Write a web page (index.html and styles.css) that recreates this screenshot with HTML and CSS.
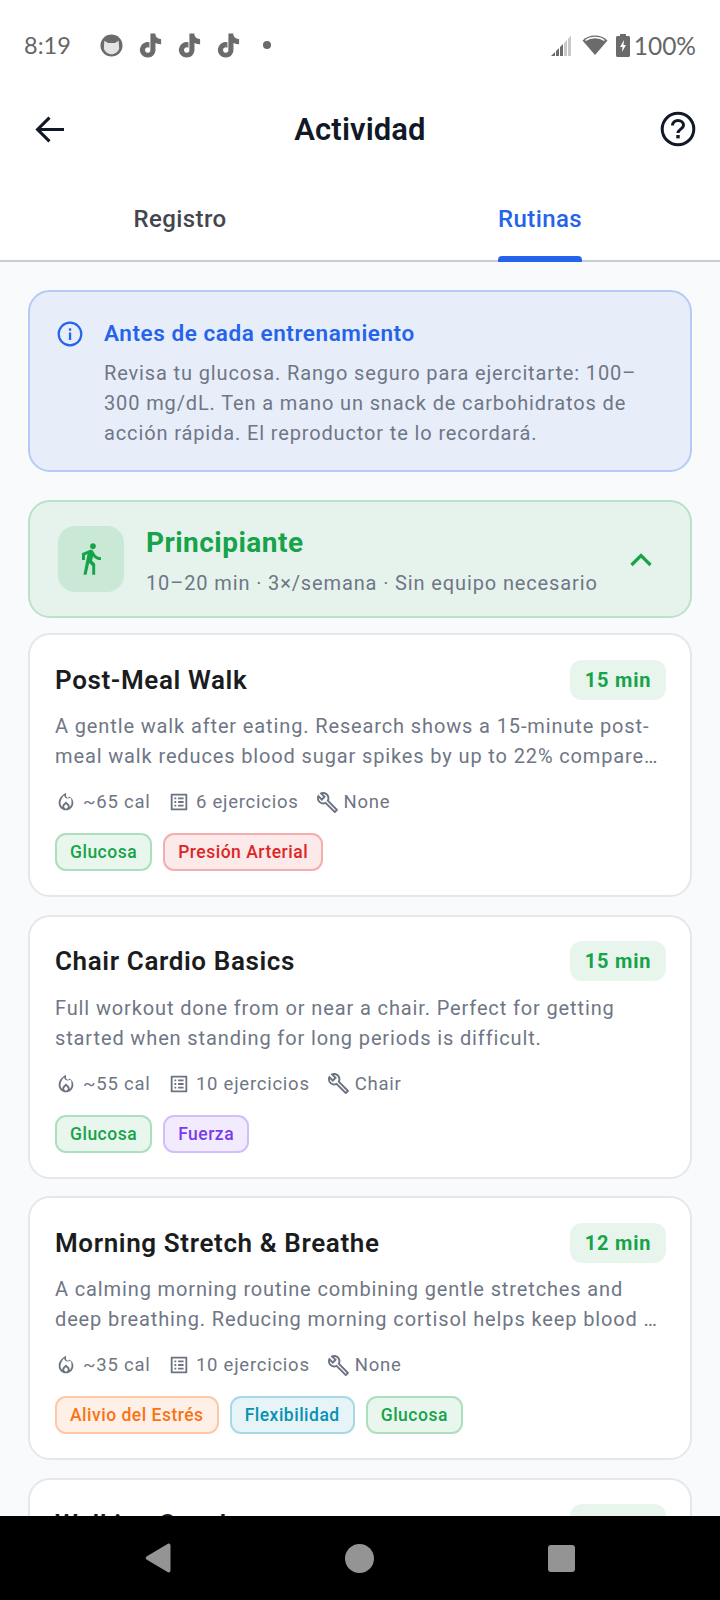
FILE: index.html
```html
<!DOCTYPE html>
<html>
<head>
    <title>Actividad</title>
    <meta charset="utf-8">
    <link rel="stylesheet" href="styles.css">
</head>
<body>
    <svg class="defs" width="0" height="0">
        <symbol id="tiktok" viewBox="-1 -1 26 26"><path stroke="#6b6b6b" stroke-width="1.200" d="M12.525.02c1.31-.02 2.61-.01 3.91-.02.08 1.53.63 3.09 1.75 4.17 1.12 1.11 2.7 1.62 4.24 1.79v4.03c-1.44-.05-2.89-.35-4.2-.97-.57-.26-1.1-.59-1.62-.93-.01 2.92.01 5.84-.02 8.75-.08 1.4-.54 2.79-1.35 3.94-1.31 1.92-3.58 3.17-5.91 3.21-1.43.08-2.86-.31-4.08-1.03-2.02-1.19-3.44-3.37-3.65-5.71-.02-.5-.03-1-.01-1.49.18-1.9 1.12-3.72 2.58-4.96 1.66-1.44 3.98-2.13 6.15-1.72.02 1.48-.04 2.96-.04 4.44-.99-.32-2.15-.23-3.02.37-.63.41-1.11 1.04-1.36 1.75-.21.51-.15 1.07-.14 1.61.24 1.64 1.82 3.02 3.5 2.87 1.12-.01 2.19-.66 2.77-1.61.19-.33.4-.67.41-1.06.1-1.79.06-3.57.07-5.36.01-4.03-.01-8.05.02-12.07z"/></symbol>
        <symbol id="flame" viewBox="0 0 24 24"><path fill="currentColor" fill-rule="evenodd" d="M16 6l-.44.55c-.42.52-.98.75-1.54.75C13 7.3 12 6.52 12 5.3V2S4 6 4 13c0 4.42 3.58 8 8 8s8-3.58 8-8c0-2.96-1.59-5.6-4-7zm-4 13c-1.1 0-2-.87-2-1.94 0-.51.2-.99.58-1.36L12 14.3l1.43 1.4c.37.37.57.85.57 1.36C14 18.13 13.1 19 12 19zm3.96-1.5c.04-.36.22-1.24-.55-2.74L12 11.4l-3.4 3.36c-.77 1.5-.6 2.38-.56 2.74C6.8 16.3 6 14.7 6 13c0-3.15 2.1-6.64 4.02-8.42.26 1.74 1.32 3.52 3.98 3.72 1.08 0 2-.42 2.7-1.1C18.100 8.500 18 11.100 18 13c0 1.700-.800 3.300-2.040 4.500z"/></symbol>
        <symbol id="list" viewBox="0 0 24 24"><path fill="currentColor" d="M19 5v14H5V5h14m1.100-2H3.900c-.5 0-.9.4-.9.900v16.200c0 .4.400.9.900.9h16.200c.4 0 .9-.5.9-.9V3.900c0-.5-.5-.9-.9-.9zM11 7h6v2h-6V7zm0 4h6v2h-6v-2zm0 4h6v2h-6zM7 7h2v2H7zm0 4h2v2H7zm0 4h2v2H7z"/></symbol>
        <symbol id="wrench" viewBox="0 0 24 24"><path fill="currentColor" d="M22.610 18.990l-9.080-9.080c.93-2.340.45-5.100-1.440-7C9.790.61 6.210.4 3.660 2.250L7.500 6.100 6.080 7.500 2.250 3.670C.39 6.210.61 9.800 2.910 12.090c1.860 1.860 4.570 2.350 6.880 1.480l9.110 9.110c.39.39 1.020.39 1.410 0l2.300-2.300c.4-.38.4-1.010 0-1.390zm-3 1.600l-9.460-9.460c-.61.45-1.290.72-2 .82-1.360.2-2.790-.21-3.830-1.250C3.370 9.760 2.930 8.500 3 7.260l3.090 3.090 4.240-4.240-3.090-3.090c1.240-.07 2.490.37 3.440 1.310 1.080 1.080 1.490 2.570 1.240 3.960-.12.71-.42 1.370-.88 1.970l9.450 9.450-.88.88z"/></symbol>
    </svg>

    <div class="phone">
        <div class="statusbar">
            <div class="status-left">
                <span class="clock">8:19</span>
                <svg class="cat" viewBox="0 0 24 24"><circle cx="12" cy="12" r="11.500" fill="#6b6b6b"/><path fill="#e4e4e4" d="M4.500 7l4 2.500h7l4-2.500.5 8c-1 3.500-4.500 6-8 6s-7-2.500-8-6z"/></svg>
                <svg class="tt"><use href="#tiktok"/></svg>
                <svg class="tt"><use href="#tiktok"/></svg>
                <svg class="tt"><use href="#tiktok"/></svg>
                <span class="dot"></span>
            </div>
            <div class="status-right">
                <svg class="signal" viewBox="0 0 23 23"><path fill="#6b6b6b" d="M0 22 4 18v4zM5 17l3-3v8H5zM9 13l3-3v12H9z"/><path fill="#c9c9c9" d="M13 9l3-3v16h-3zM17 5l3-3.500V22h-3z"/></svg>
                <svg class="wifi" viewBox="0 0 26 22"><path fill="#6b6b6b" d="M13 21 .5 6.500C4 3 8.300 1.500 13 1.500S22 3 25.500 6.500z"/><path fill="none" stroke="#fff" stroke-width="1.300" d="M3.500 6.600C6.200 4.500 9.400 3.500 13 3.500s6.800 1 9.500 3.100"/></svg>
                <svg class="batt" viewBox="0 0 14 23"><path fill="#6b6b6b" d="M4 0h6v2h2.500c.8 0 1.500.7 1.500 1.500V21.500c0 .8-.7 1.500-1.500 1.500h-11C.7 23 0 22.300 0 21.500V3.500C0 2.700.7 2 1.500 2H4z"/><path fill="#fff" d="M8 6 4 13h2.500L6 18l4-7H7.500z"/></svg>
                <span class="pct">100%</span>
            </div>
        </div>

        <div class="appbar">
            <svg class="back" viewBox="0 0 28 26"><path fill="none" stroke="#111827" stroke-width="3" d="M28 13H3M14 1.500 2.500 13 14 24.500"/></svg>
            <div class="appbar-title">Actividad</div>
            <svg class="help" viewBox="0 0 36 36"><circle cx="18" cy="18" r="15.800" fill="none" stroke="#111827" stroke-width="3"/><path fill="none" stroke="#111827" stroke-width="3" d="M12.500 14.500c0-3 2.400-5 5.500-5s5.500 2 5.500 4.700c0 3.800-5.500 4-5.500 7.800"/><rect x="16.300" y="24" width="3.400" height="3.400" fill="#111827"/></svg>
        </div>

        <div class="tabs">
            <div class="tab"><span class="tab-label">Registro</span></div>
            <div class="tab active"><span class="tab-label">Rutinas</span></div>
        </div>

        <div class="content">
            <div class="notice">
                <svg class="notice-icon" viewBox="0 0 26 26"><circle cx="13" cy="13" r="11.300" fill="none" stroke="#2563eb" stroke-width="2.200"/><rect x="11.900" y="11.500" width="2.300" height="7.500" fill="#2563eb"/><rect x="11.900" y="7.300" width="2.300" height="2.500" fill="#2563eb"/></svg>
                <div>
                    <div class="notice-title">Antes de cada entrenamiento</div>
                    <div class="notice-text">Revisa tu glucosa. Rango seguro para ejercitarte: 100–300 mg/dL. Ten a mano un snack de carbohidratos de acción rápida. El reproductor te lo recordará.</div>
                </div>
            </div>

            <div class="level">
                <div class="level-icon">
                    <svg viewBox="6 1.500 13 21.500" width="19" height="32"><path fill="#16a34a" d="M13.500 5.500c1.100 0 2-.9 2-2s-.9-2-2-2-2 .9-2 2 .9 2 2 2zM9.800 8.900 7 23h2.100l1.800-8 2.100 2v6h2v-7.500l-2.100-2 .6-3C14.800 12 16.800 13 19 13v-2c-1.900 0-3.500-1-4.300-2.400l-1-1.600c-.4-.6-1-1-1.700-1-.3 0-.5.100-.8.100L6 8.300V13h2V9.600l1.800-.7z"/></svg>
                </div>
                <div class="level-info">
                    <div class="level-name">Principiante</div>
                    <div class="level-sub">10–20 min · 3×/semana · Sin equipo necesario</div>
                </div>
                <svg class="chevron" viewBox="0 0 22 14" width="22" height="14"><path fill="none" stroke="#16a34a" stroke-width="3.200" d="M1.500 12 11 2.500 20.500 12"/></svg>
            </div>

            <div class="card">
                <div class="card-head">
                    <div class="card-title">Post-Meal Walk</div>
                    <div class="pill">15 min</div>
                </div>
                <div class="card-desc">A gentle walk after eating. Research shows a 15-minute post-meal walk reduces blood sugar spikes by up to 22% compare…</div>
                <div class="meta">
                    <span class="meta-item"><svg><use href="#flame"/></svg>~65 cal</span>
                    <span class="meta-item"><svg><use href="#list"/></svg>6 ejercicios</span>
                    <span class="meta-item"><svg class="wr"><use href="#wrench"/></svg>None</span>
                </div>
                <div class="chips">
                    <span class="chip green">Glucosa</span>
                    <span class="chip red">Presión Arterial</span>
                </div>
            </div>

            <div class="card">
                <div class="card-head">
                    <div class="card-title">Chair Cardio Basics</div>
                    <div class="pill">15 min</div>
                </div>
                <div class="card-desc">Full workout done from or near a chair. Perfect for getting started when standing for long periods is difficult.</div>
                <div class="meta">
                    <span class="meta-item"><svg><use href="#flame"/></svg>~55 cal</span>
                    <span class="meta-item"><svg><use href="#list"/></svg>10 ejercicios</span>
                    <span class="meta-item"><svg class="wr"><use href="#wrench"/></svg>Chair</span>
                </div>
                <div class="chips">
                    <span class="chip green">Glucosa</span>
                    <span class="chip purple">Fuerza</span>
                </div>
            </div>

            <div class="card">
                <div class="card-head">
                    <div class="card-title">Morning Stretch &amp; Breathe</div>
                    <div class="pill">12 min</div>
                </div>
                <div class="card-desc">A calming morning routine combining gentle stretches and deep breathing. Reducing morning cortisol helps keep blood …</div>
                <div class="meta">
                    <span class="meta-item"><svg><use href="#flame"/></svg>~35 cal</span>
                    <span class="meta-item"><svg><use href="#list"/></svg>10 ejercicios</span>
                    <span class="meta-item"><svg class="wr"><use href="#wrench"/></svg>None</span>
                </div>
                <div class="chips">
                    <span class="chip orange">Alivio del Estrés</span>
                    <span class="chip cyan">Flexibilidad</span>
                    <span class="chip green">Glucosa</span>
                </div>
            </div>

            <div class="card">
                <div class="card-head">
                    <div class="card-title">Walking Snacks</div>
                    <div class="pill">10 min</div>
                </div>
            </div>
        </div>

        <div class="navbar">
            <svg viewBox="0 0 26 30" width="26" height="30"><path fill="#949494" d="M25.500 2.500v25c0 1.800-1.800 2.500-3 1.500L1.500 16.500c-1-.8-1-2.200 0-3L22.500 1c1.200-1 3-.3 3 1.500z"/></svg>
            <span class="nav-circle"></span>
            <span class="nav-square"></span>
        </div>
    </div>
</body>
</html>
```

FILE: styles.css
```css
* {
    box-sizing: border-box;
}

html, body {
    margin: 0;
    padding: 0;
}

body {
    font-family: Roboto, "Liberation Sans", sans-serif;
    background: #fff;
}

.defs {
    position: absolute;
}

.phone {
    width: 720px;
    height: 1600px;
    display: flex;
    flex-direction: column;
    overflow: hidden;
}

/* status bar */
.statusbar {
    height: 92px;
    padding-bottom: 2px;
    flex: none;
    display: flex;
    justify-content: space-between;
    align-items: center;
    padding-left: 24px;
    padding-right: 24px;
}

.status-left, .status-right {
    display: flex;
    align-items: center;
}

.clock {
    font-family: Lato, sans-serif;
    font-size: 23.500px;
    color: #666;
    width: 76px;
}

.cat {
    width: 23px;
    height: 23px;
    margin-right: 15px;
}

.tt {
    width: 25px;
    height: 27px;
    fill: #6b6b6b;
    margin-right: 14px;
}

.dot {
    width: 8px;
    height: 8px;
    border-radius: 50%;
    background: #6b6b6b;
    margin-left: 8px;
}

.signal {
    width: 23px;
    height: 23px;
    margin-right: 8px;
}

.wifi {
    width: 26px;
    height: 22px;
    margin-right: 8px;
}

.batt {
    width: 14px;
    height: 23px;
    margin-right: 4px;
}

.pct {
    font-family: Lato, sans-serif;
    font-size: 24.500px;
    color: #666;
}

/* app bar */
.appbar {
    height: 74px;
    flex: none;
    display: flex;
    justify-content: space-between;
    align-items: center;
    padding: 0 24px 0 35px;
}

.back {
    width: 29px;
    height: 27px;
    margin-right: -4px;
}

.appbar-title {
    font-size: 31px;
    font-weight: 600;
    letter-spacing: 0.1px;
    color: #111827;
}

.help {
    width: 36px;
    height: 36px;
}

/* tabs */
.tabs {
    height: 96px;
    flex: none;
    display: flex;
    border-bottom: 2px solid #c9ccd6;
}

.tab {
    flex: 1;
    text-align: center;
    padding-top: 36px;
    font-size: 24px;
    line-height: 34px;
    font-weight: 500;
    letter-spacing: 0.4px;
    color: #44464f;
}

.tab-label {
    display: inline-block;
    height: 60px;
    position: relative;
}

.tab.active {
    color: #2563eb;
}

.tab.active .tab-label::after {
    content: "";
    position: absolute;
    left: 0;
    right: 0;
    bottom: 0;
    height: 6px;
    background: #2563eb;
    border-radius: 4px 4px 0 0;
}

/* content */
.content {
    flex: 1;
    min-height: 0;
    overflow: hidden;
    background: #f8fafc;
    padding: 28px 28px 0;
}

.notice {
    height: 182px;
    display: flex;
    gap: 21px;
    background: #e7eefa;
    border: 2px solid #b5cbf5;
    border-radius: 22px;
    padding: 26px 26px 0 27px;
}

.notice-icon {
    width: 26px;
    height: 26px;
    flex: none;
    margin-top: 3px;
}

.notice-title {
    font-size: 22.500px;
    line-height: 30px;
    font-weight: 600;
    letter-spacing: 0.56px;
    color: #2563eb;
}

.notice-text {
    margin-top: 10px;
    font-size: 20px;
    line-height: 30px;
    letter-spacing: 0.87px;
    color: #6f7685;
}

.level {
    height: 118px;
    margin-top: 28px;
    display: flex;
    align-items: center;
    background: #e6f3ec;
    border: 2px solid #b9e2c8;
    border-radius: 22px;
    padding: 0 38px 0 28px;
}

.level-icon {
    width: 66px;
    height: 66px;
    flex: none;
    display: flex;
    align-items: center;
    justify-content: center;
    background: #c9e8d6;
    border-radius: 17px;
    margin-right: 22px;
}

.level-info {
    flex: 1;
    margin-top: 4px;
}

.level-name {
    font-size: 28px;
    line-height: 36px;
    font-weight: 700;
    letter-spacing: 0.47px;
    color: #16a34a;
}

.level-sub {
    margin-top: 8px;
    font-size: 20px;
    line-height: 28px;
    letter-spacing: 0.87px;
    color: #6f7685;
}

.chevron {
    margin-top: 2px;
}

.card {
    height: 264px;
    margin-top: 15px;
    margin-bottom: 17.600px;
    background: #fff;
    border: 2px solid #e5e7eb;
    border-radius: 22px;
    padding: 24px 24px 0 25px;
}

.card + .card {
    margin-top: 0;
}

.card-head {
    display: flex;
    justify-content: space-between;
    align-items: center;
    height: 41px;
}

.card-title {
    font-size: 26px;
    font-weight: 600;
    letter-spacing: 0.62px;
    color: #1a1c1e;
}

.pill {
    height: 40px;
    width: 96px;
    text-align: center;
    line-height: 40px;
    background: #e8f5ec;
    border-radius: 12px;
    font-size: 20px;
    font-weight: 700;
    letter-spacing: 0.8px;
    color: #16a34a;
}

.card-desc {
    margin-top: 11px;
    font-size: 20px;
    line-height: 30px;
    letter-spacing: 0.87px;
    color: #6f7685;
}

.meta {
    margin-top: 18px;
    display: flex;
    align-items: center;
    gap: 17.500px;
    height: 26px;
    font-size: 18.500px;
    letter-spacing: 0.75px;
    color: #6f7685;
}

.meta-item {
    display: flex;
    align-items: center;
    gap: 6px;
}

.meta-item svg {
    width: 22px;
    height: 22px;
    color: #6b7280;
}

.meta-item svg.wr {
    width: 23px;
    height: 23px;
    margin-right: -1.500px;
}

.chips {
    margin-top: 18px;
    display: flex;
    gap: 11px;
}

.chip {
    height: 38px;
    line-height: 34px;
    padding: 0 13px;
    border-radius: 11px;
    border: 2px solid;
    font-size: 17.500px;
    font-weight: 500;
    letter-spacing: 0.5px;
}

.green {
    color: #16a34a;
    background: #e8f6ed;
    border-color: #acdfbd;
}

.red {
    color: #dc2626;
    background: #fce9e9;
    border-color: #f5aeae;
}

.purple {
    color: #7c3aed;
    background: #f2ebfe;
    border-color: #d3bdfa;
}

.orange {
    color: #f97316;
    background: #fff0e7;
    border-color: #fdc9a5;
}

.cyan {
    color: #0891b2;
    background: #e6f4f8;
    border-color: #a8d8e6;
}

/* nav bar */
.navbar {
    height: 84px;
    flex: none;
    background: #000;
    display: flex;
    align-items: center;
    padding: 0 0 0 145px;
    gap: 174px;
}

.nav-circle {
    width: 29px;
    height: 29px;
    border-radius: 50%;
    background: #949494;
}

.nav-square {
    width: 27px;
    height: 27px;
    border-radius: 3px;
    background: #949494;
}
```
